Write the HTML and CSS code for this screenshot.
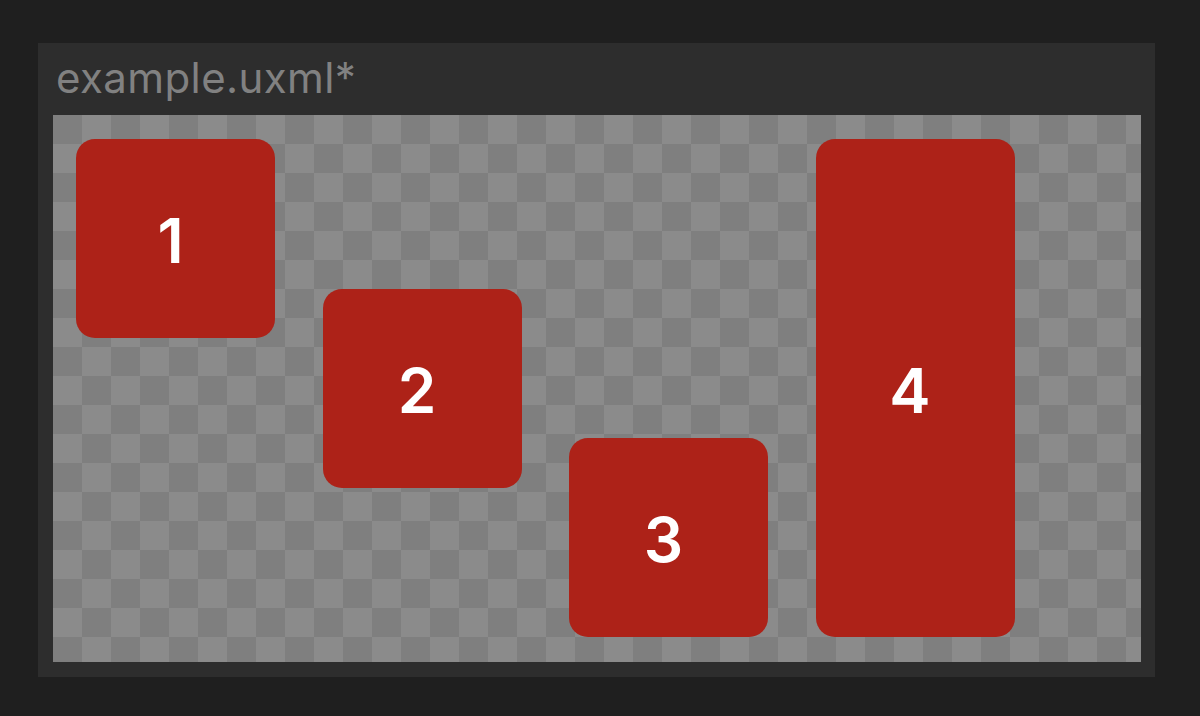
FILE: index.html
```html
<!DOCTYPE html>
<html lang="en">
<head>
<meta charset="utf-8">
<title>example.uxml</title>
<link rel="stylesheet" href="styles.css">
</head>
<body>
  <div class="panel">
    <div class="panel-title">example.uxml*</div>
    <div class="canvas">
      <div class="box box-start">1</div>
      <div class="box box-center">2</div>
      <div class="box box-end">3</div>
      <div class="box box-stretch">4</div>
    </div>
  </div>
</body>
</html>
```
FILE: styles.css
```css
html, body {
  margin: 0;
  height: 100%;
}
body {
  background: #1f1f1f;
  padding: 43px 45px 39px 38px;
  box-sizing: border-box;
  font-family: Inter, "Liberation Sans", sans-serif;
}
.panel {
  height: 100%;
  background: #2d2d2d;
  display: flex;
  flex-direction: column;
  padding: 0 14px 15px 15px;
  box-sizing: border-box;
}
.panel-title {
  height: 72px;
  line-height: 70px;
  font-size: 42px;
  letter-spacing: 0.4px;
  color: #818181;
  padding-left: 3px;
  flex: none;
}
.canvas {
  flex: 1;
  display: flex;
  align-items: flex-start;
  gap: 47.5px;
  padding: 24px 23px 25px 23px;
  background: repeating-conic-gradient(#8b8b8b 0 25%, #7f7f7f 0 50%) 0 0 / 58px 58px;
}
.box {
  width: 199px;
  height: 199px;
  flex: none;
  box-sizing: border-box;
  padding: 4px 10px 0 0;
  background: #ad2218;
  border-radius: 19px;
  color: #ffffff;
  font-size: 62px;
  font-weight: 600;
  display: flex;
  align-items: center;
  justify-content: center;
}
.box-start { align-self: flex-start; }
.box-center { align-self: center; }
.box-end { align-self: flex-end; }
.box-stretch { align-self: stretch; height: auto; }
```
